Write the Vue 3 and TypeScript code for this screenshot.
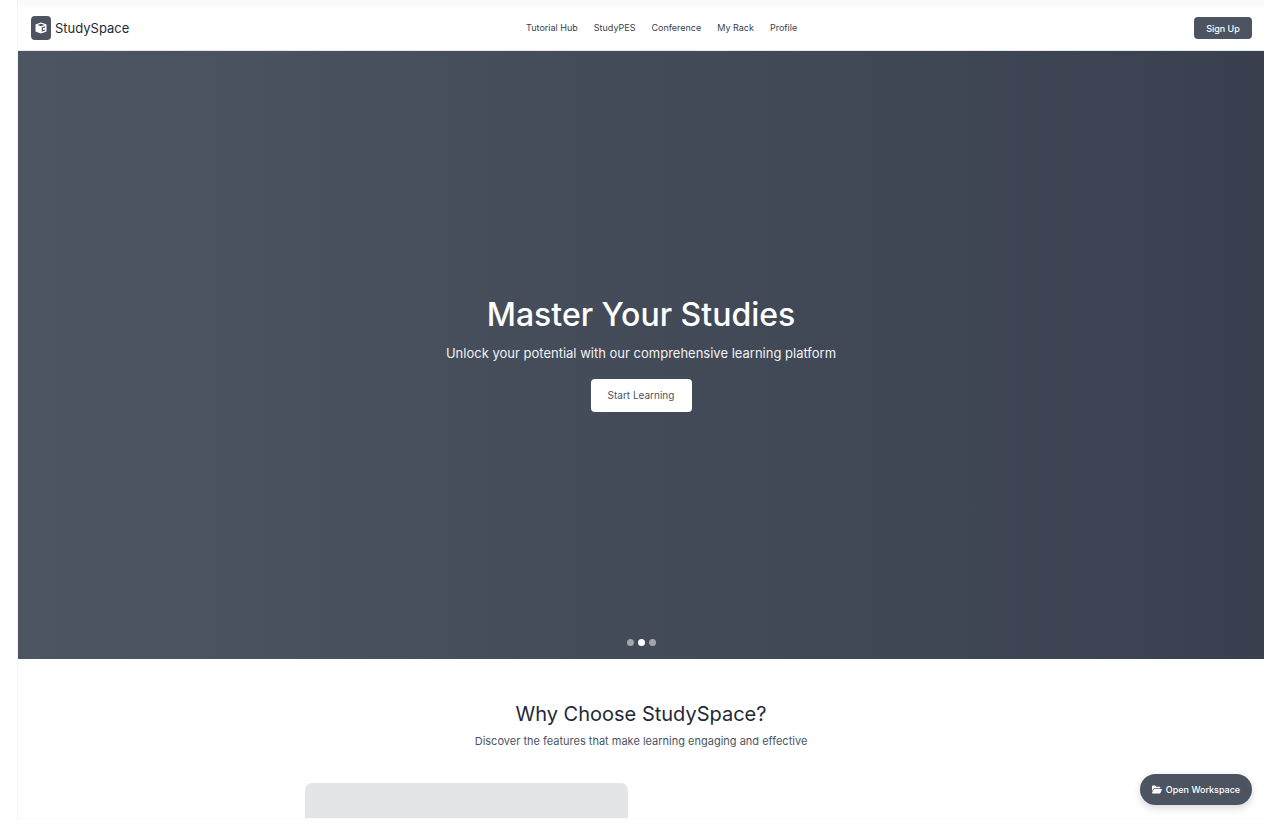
<script setup lang="ts">
import { ref } from 'vue'

interface Slide {
  title: string
  text: string
  action: string
}

const links: string[] = ['Tutorial Hub', 'StudyPES', 'Conference', 'My Rack', 'Profile']

const slide: Slide = {
  title: 'Master Your Studies',
  text: 'Unlock your potential with our comprehensive learning platform',
  action: 'Start Learning',
}

const active = ref<number>(1)
</script>

<template>
  <div class="page">
    <div class="window">
      <div class="strip"></div>
      <header class="header">
        <a class="brand" href="#">
          <span class="logo">
            <svg viewBox="0 0 24 24" aria-hidden="true">
              <path fill-rule="evenodd" d="M12 1 22 4.500Q23 5 23 6v12q0 1-1 1.500L12 23 2 19.500Q1 19 1 18V6Q1 5 2 4.500ZM12 3.500 5 6l7 2.500L19 6ZM13.500 11v8.500l6.500-2.300V8.700Z" />
              <path d="M16 12.500 20 11v4l-4 1.500Z" />
            </svg>
          </span>
          <span class="name">StudySpace</span>
        </a>
        <nav class="nav">
          <a v-for="link in links" :key="link" href="#">{{ link }}</a>
        </nav>
        <button class="signup" type="button">Sign Up</button>
      </header>

      <section class="hero">
        <h1>{{ slide.title }}</h1>
        <p>{{ slide.text }}</p>
        <button class="start" type="button">{{ slide.action }}</button>
        <div class="dots">
          <button
            v-for="n in 3"
            :key="n"
            type="button"
            class="dot"
            :class="{ on: active === n - 1 }"
            :aria-label="`Slide ${n}`"
            @click="active = n - 1"
          ></button>
        </div>
      </section>

      <section class="features">
        <h2>Why Choose StudySpace?</h2>
        <p>Discover the features that make learning engaging and effective</p>
        <div class="grid">
          <div class="card"></div>
        </div>
      </section>

      <button class="workspace" type="button">
        <svg viewBox="0 0 576 512" aria-hidden="true">
          <path d="M70 210 0 350V96c0-35 20-64 50-64h130l64 64H430c30 0 50 20 50 50v32H130c-30 0-48 10-60 32z" />
          <path d="M150 224h394c25 0 38 24 27 48l-90 180c-8 18-24 28-44 28H32c-25 0-38-24-27-48l90-180c10-18 30-28 55-28z" />
        </svg>
        <span>Open Workspace</span>
      </button>
    </div>
  </div>
</template>

<style>
body {
  margin: 0;
  background: #fff;
}
</style>

<style scoped>
.page {
  box-sizing: border-box;
  height: 100vh;
  padding: 0 4px 17px 17px;
  font-family: Inter, "Liberation Sans", sans-serif;
  color: #1f2937;
}
.window {
  box-sizing: border-box;
  position: relative;
  display: flex;
  flex-direction: column;
  height: 100%;
  overflow: hidden;
  border-left: 1px solid #f4f4f5;
  border-bottom: 1px solid #fafafa;
}
a {
  color: inherit;
  text-decoration: none;
}
button {
  border: 0;
  padding: 0;
  font-family: inherit;
  cursor: pointer;
}
.strip {
  flex: none;
  height: 6px;
  background: #f9fafb;
}
.header {
  flex: none;
  display: flex;
  align-items: center;
  justify-content: space-between;
  height: 44px;
  padding: 0 12px 0 13px;
  border-bottom: 1px solid #e5e7eb;
}
.brand {
  display: flex;
  align-items: center;
  gap: 4px;
}
.logo {
  display: flex;
  align-items: center;
  justify-content: center;
  width: 20px;
  height: 24px;
  border-radius: 4px;
  background: #4c5462;
}
.logo svg {
  width: 12px;
  height: 12px;
  fill: #fff;
}
.name {
  font-size: 13px;
  line-height: 20px;
}
.nav {
  display: flex;
  gap: 16px;
  font-size: 9px;
  line-height: 14px;
  color: #374151;
}
.signup {
  width: 58px;
  height: 22px;
  border-radius: 4px;
  background: #4c5462;
  color: #fff;
  font-size: 9px;
  font-weight: 500;
}
.hero {
  box-sizing: border-box;
  position: relative;
  flex: none;
  display: flex;
  flex-direction: column;
  align-items: center;
  justify-content: center;
  height: 608px;
  padding-bottom: 2px;
  background: linear-gradient(to right, #4e5562, #434b59 50%, #3a404f);
  color: #fff;
}
.hero h1 {
  margin: 0 0 10px;
  font-size: 32px;
  line-height: 36px;
  font-weight: 500;
}
.hero p {
  margin: 0 0 16px;
  font-size: 13px;
  line-height: 20px;
  color: #f0f1f3;
}
.start {
  width: 101px;
  height: 33px;
  border-radius: 4px;
  background: #fff;
  color: #4b5563;
  font-size: 10px;
}
.dots {
  position: absolute;
  bottom: 13px;
  display: flex;
  gap: 4px;
}
.dot {
  width: 7px;
  height: 7px;
  border-radius: 50%;
  background: #a1a5ac;
}
.dot.on {
  background: #fff;
}
.features {
  flex: 1;
  min-height: 0;
  padding: 41px 16px 0;
  text-align: center;
}
.features h2 {
  margin: 0 0 4px;
  font-size: 20px;
  line-height: 28px;
  font-weight: 400;
}
.features p {
  margin: 0 0 33px;
  font-size: 11px;
  line-height: 18px;
  color: #4b5563;
}
.grid {
  display: grid;
  grid-template-columns: 1fr 1fr;
  gap: 26px;
  max-width: 672px;
  margin: 0 auto;
}
.card {
  height: 200px;
  border-radius: 7px;
  background: #e4e5e9;
}
.workspace {
  position: absolute;
  right: 12px;
  bottom: 13px;
  display: flex;
  align-items: center;
  justify-content: center;
  gap: 4px;
  width: 112px;
  height: 31px;
  border-radius: 16px;
  background: #4c5462;
  color: #fff;
  font-size: 9px;
  font-weight: 500;
  box-shadow: 0 3px 8px rgba(0, 0, 0, 0.16);
}
.workspace svg {
  width: 10px;
  height: 9px;
  fill: #fff;
}
</style>
